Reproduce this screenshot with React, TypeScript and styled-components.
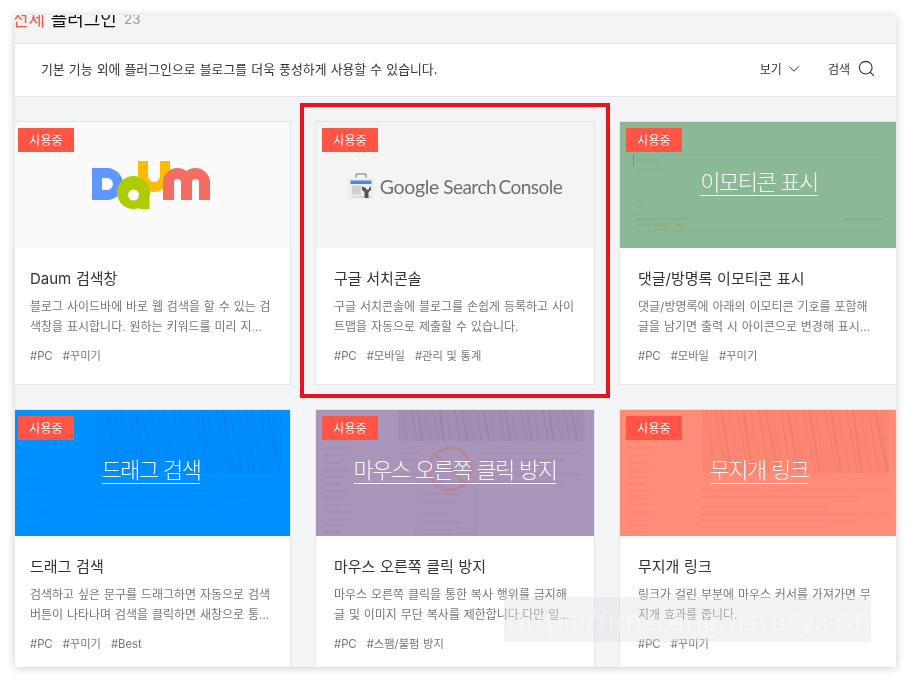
import React from "react";
import styled, { createGlobalStyle } from "styled-components";
import { Search, ChevronDown } from "lucide-react";

const Global = createGlobalStyle`
  html, body { margin: 0; padding: 0; background: #fff; }
  * { box-sizing: border-box; }
  body {
    font-family: Inter, "Noto Sans CJK KR", "Noto Sans", sans-serif;
    word-spacing: 0.03em;
  }
`;

const Page = styled.div`
  width: 911px;
  height: 682px;
  padding: 15px;
  overflow: hidden;
  background: #fff;
  filter: blur(0.35px);
`;

const Panel = styled.main`
  position: relative;
  width: 881px;
  height: 652px;
  overflow: hidden;
  background: #f3f4f6;
  border-radius: 0 6px 0 0;
  box-shadow: 0 1px 10px rgba(0, 0, 0, 0.2);
`;

const Heading = styled.h2`
  height: 28px;
  margin: 0;
  overflow: hidden;
  display: flex;
  align-items: flex-end;
  gap: 7px;
  font-weight: 400;
  color: #111;
`;

const HeadingText = styled.span`
  font-size: 18px;
  line-height: 28px;
  margin: 0 0 9px -3px;
  white-space: nowrap;
`;

const Accent = styled.span`
  color: #ff5544;
`;

const Count = styled.span`
  align-self: flex-start;
  font-size: 13.5px;
  line-height: 18px;
  margin-top: -5px;
  color: #9a9a9a;
`;

const Toolbar = styled.div`
  height: 54px;
  padding: 0 20px 3px 26px;
  display: flex;
  align-items: center;
  justify-content: space-between;
  background: #fff;
  border-top: 1px solid #e2e5ec;
  border-bottom: 1px solid #e2e5ec;
  color: #333;
  font-size: 12.9px;
`;

const Tools = styled.div`
  display: flex;
  align-items: center;
  gap: 25px;
`;

const Tool = styled.span<{ $gap: number }>`
  display: flex;
  align-items: center;
  gap: ${(p) => p.$gap}px;
  color: #333;
  font-size: 12px;
`;

const Grid = styled.div`
  display: grid;
  grid-template-columns: repeat(3, 280px);
  gap: 24px;
  margin: 24px 0 0 -4px;
`;

const Card = styled.article`
  height: 264px;
  background: #fff;
  border: 1px solid #e2e5ec;
`;

const Thumb = styled.div<{ $bg: string }>`
  position: relative;
  height: 126px;
  display: flex;
  align-items: center;
  justify-content: center;
  overflow: hidden;
  background: ${(p) => p.$bg};
`;

const Badge = styled.span`
  position: absolute;
  top: 6px;
  left: 6px;
  z-index: 2;
  width: 56px;
  height: 24px;
  padding-bottom: 2px;
  display: flex;
  align-items: center;
  justify-content: center;
  background: #ff5544;
  color: #fff;
  font-size: 12px;
`;

const HeroTitle = styled.a`
  position: relative;
  z-index: 1;
  margin-top: -5px;
  color: rgba(255, 255, 255, 0.94);
  font-size: 22px;
  font-weight: 300;
  line-height: 26px;
  letter-spacing: -1.5px;
  white-space: nowrap;
  text-decoration: none;
  border-bottom: 1px solid #fff;
`;

const Texture = styled.svg`
  position: absolute;
  inset: 0;
  width: 100%;
  height: 100%;
`;

const Body = styled.div`
  padding: 20px 19px 0 18px;
`;

const Title = styled.h3`
  margin: 0;
  font-size: 15px;
  font-weight: 400;
  line-height: 22px;
  color: #333;
`;

const Desc = styled.p`
  height: 40px;
  margin: 7px 0 0;
  font-size: 12px;
  line-height: 20px;
  color: #777;
  overflow: hidden;
  display: -webkit-box;
  -webkit-box-orient: vertical;
  -webkit-line-clamp: 2;
`;

const Tags = styled.div`
  display: flex;
  gap: 10px;
  margin-top: 10px;
  font-size: 11.3px;
  line-height: 18px;
  color: #777;
`;

const Wordmark = styled.div`
  display: flex;
  align-items: center;
  gap: 6px;
  margin-top: 3px;
  color: #6f6f6f;
  font-family: Lato, Roboto, sans-serif;
  white-space: nowrap;
`;

const Google = styled.span`
  font-size: 19.5px;
  letter-spacing: -0.3px;
`;

const Console = styled.span`
  font-size: 19px;
  letter-spacing: -0.5px;
  word-spacing: -2px;
  margin-left: -2px;
`;

const DaumSvg = styled.svg`
  width: 120px;
  height: 48px;
  margin-left: 2px;
`;

const Highlight = styled.div`
  position: absolute;
  left: 285px;
  top: 88px;
  width: 310px;
  height: 295px;
  border: 4px solid #e8141c;
  z-index: 5;
  pointer-events: none;
`;

const Watermark = styled.div`
  position: absolute;
  left: 489px;
  top: 582px;
  width: 367px;
  height: 45px;
  z-index: 6;
  display: flex;
  align-items: center;
  padding-left: 3px;
  background: rgba(225, 225, 228, 0.42);
  color: rgba(255, 255, 255, 0.3);
  font-family: "Open Sans", sans-serif;
  font-size: 29.5px;
  word-spacing: 0;
  white-space: nowrap;
  overflow: hidden;
`;

const DaumLogo = () => (
  <DaumSvg viewBox="0 0 120 48">
    <path fillRule="evenodd" fill="#6097ff" d="M0 7h15a16 16 0 0 1 0 32H0zM10 17v12h5a6 6 0 0 0 0-12z" />
    <path fill="none" stroke="#ffbb00" strokeWidth="10" d="M51 0V15A11 11 0 0 0 73 15V0" />
    <path fill="none" stroke="#f46d63" strokeWidth="11" d="M76.5 39V21.5A9 9 0 0 1 94.500 21.500V39M94.500 21.500A9 9 0 0 1 112.500 21.500V39" />
    <path fill="#aecb00" fillRule="evenodd" d="M41.500 15a16.500 16.500 0 1 1 0 33a16.500 16.500 0 1 1 0-33zM41.500 28.500a5.500 5.500 0 1 0 0 11a5.500 5.500 0 1 0 0-11z" />
    <rect x="47.500" y="33" width="10" height="15" fill="#aecb00" />
  </DaumSvg>
);

const GscIcon = () => (
  <svg width="26" height="27" viewBox="0 0 26 27">
    <path d="M8 5V2.500a1.500 1.500 0 0 1 1.500-1.500h7A1.500 1.500 0 0 1 18 2.500V5" fill="none" stroke="#9a9a9a" strokeWidth="1.600" />
    <rect x="0.500" y="4.500" width="25" height="21.500" rx="2" fill="#ededed" />
    <rect x="2.500" y="7.500" width="21" height="3.500" fill="#4a86e8" />
    <rect x="4" y="12.500" width="9" height="9" fill="#cfcfcf" />
    <rect x="4" y="23" width="19" height="1.500" fill="#d6d6d6" />
    <path d="M14 13.500v3.500l2.500 2v6h4v-6l2.500-2v-3.500l-2 1.500v1.500h-3V15z" fill="#555" />
  </svg>
);

type Kind = "none" | "comment" | "drag" | "mouse" | "rainbow";

const SIDE_ROWS = [38, 45, 53, 60, 67, 74, 81, 88, 95, 102, 115, 122];
const BODY_ROWS = [80, 87, 97, 104, 110, 117];
const MOUSE_ROWS = [43, 50, 57, 64, 71];

const TextRows = ({ x, ys, w, color }: { x: number; ys: number[]; w: number; color: string }) => (
  <g stroke={color} strokeWidth="1.400" strokeDasharray="2 0.700" fill="none" opacity="0.13">
    {ys.map((y, i) => (
      <path key={y} d={`M${x} ${y}h${w - (i % 3) * (w / 6)}`} />
    ))}
  </g>
);

const Books = ({ h, color }: { h: number; color: string }) => (
  <g>
    <rect x="82" y="0" width="187" height={h} fill={color} opacity="0.08" />
    <g stroke={color} fill="none" opacity="0.16">
      {Array.from({ length: 25 }, (_, i) => {
        const x0 = 86 + i * 7.300 + ((i * 5) % 3);
        const slant = (h / 63) * (9 + ((i * 3) % 5));
        const bottom = Math.min(x0 + slant, 268);
        return <path key={i} d={`M${x0} 0L${bottom} ${h}`} strokeWidth={0.6 + (i % 3) * 0.7} />;
      })}
    </g>
  </g>
);

const ThumbTexture = ({ kind }: { kind: Kind }) => {
  if (kind === "none") return null;
  if (kind === "comment") {
    return (
      <Texture viewBox="0 0 278 126">
        <rect x="13" y="32" width="1" height="12" fill="#5d8a68" opacity="0.7" />
        <TextRows x={17} ys={[38]} w={22} color="#2f5a3a" />
        <TextRows x={17} ys={[48]} w={30} color="#3f6a4a" />
        <rect x="14" y="79" width="251" height="14" fill="none" stroke="#6f9f7b" strokeWidth="0.500" opacity="0.3" />
        <path d="M14 33H265M14 108H265" stroke="#6f9f7b" strokeWidth="0.500" opacity="0.25" />
        <TextRows x={18} ys={[85]} w={5} color="#2f5a3a" />
        <TextRows x={17} ys={[97]} w={50} color="#2f5a3a" />
        <TextRows x={17} ys={[103]} w={14} color="#2f5a3a" />
        <TextRows x={225} ys={[97]} w={38} color="#2f5a3a" />
        <g fill="#a3a65a" opacity="0.6">
          {[36, 42, 47, 58, 63].map((cx) => (
            <circle key={cx} cx={cx} cy="103" r="2" />
          ))}
        </g>
      </Texture>
    );
  }
  const tone = kind === "drag" ? "#0062c8" : kind === "mouse" ? "#6b5a6d" : "#c9503a";
  return (
    <Texture viewBox="0 0 278 126">
      <Books h={kind === "mouse" ? 31 : 63} color={tone} />
      <TextRows x={8} ys={SIDE_ROWS} w={26} color={tone} />
      {kind === "mouse" ? (
        <>
          <TextRows x={165} ys={MOUSE_ROWS} w={100} color={tone} />
          <TextRows x={85} ys={[43, 50, 57, 64]} w={20} color={tone} />
          <rect x="100" y="72" width="60" height="52" fill="none" stroke={tone} strokeWidth="0.500" opacity="0.2" />
          <TextRows x={105} ys={[84, 92, 104, 112, 120]} w={40} color={tone} />
          <g fill="none" stroke="#bd7f87" strokeWidth="3.200" opacity="0.6">
            <circle cx="134" cy="59" r="21" />
            <path d="M119 44L149 74" />
          </g>
        </>
      ) : (
        <TextRows x={82} ys={BODY_ROWS} w={188} color={tone} />
      )}
    </Texture>
  );
};

const CARDS: {
  bg: string;
  hero?: string;
  logo?: "daum" | "gsc";
  kind: Kind;
  title: string;
  desc: string;
  tags: string[];
}[] = [
  {
    bg: "#fafafa",
    logo: "daum",
    kind: "none",
    title: "Daum 검색창",
    desc: "블로그 사이드바에 바로 웹 검색을 할 수 있는 검색창을 표시합니다. 원하는 키워드를 미리 지정해 둘 수 있습니다.",
    tags: ["#PC", "#꾸미기"],
  },
  {
    bg: "#f4f4f4",
    logo: "gsc",
    kind: "none",
    title: "구글 서치콘솔",
    desc: "구글 서치콘솔에 블로그를 손쉽게 등록하고 사이트맵을 자동으로 제출할 수 있습니다.",
    tags: ["#PC", "#모바일", "#관리 및 통계"],
  },
  {
    bg: "#8cb995",
    hero: "이모티콘 표시",
    kind: "comment",
    title: "댓글/방명록 이모티콘 표시",
    desc: "댓글/방명록에 아래의 이모티콘 기호를 포함해 글을 남기면 출력 시 아이콘으로 변경해 표시합니다. 다양한 기호를 지원합니다.",
    tags: ["#PC", "#모바일", "#꾸미기"],
  },
  {
    bg: "#0090ff",
    hero: "드래그 검색",
    kind: "drag",
    title: "드래그 검색",
    desc: "검색하고 싶은 문구를 드래그하면 자동으로 검색 버튼이 나타나며 검색을 클릭하면 새창으로 통합 검색 결과를 보여줍니다.",
    tags: ["#PC", "#꾸미기", "#Best"],
  },
  {
    bg: "#a994ba",
    hero: "마우스 오른쪽 클릭 방지",
    kind: "mouse",
    title: "마우스 오른쪽 클릭 방지",
    desc: "마우스 오른쪽 클릭을 통한 복사 행위를 금지해 글 및 이미지 무단 복사를 제한합니다.다만 일부 브라우저에서는 동작하지 않습니다.",
    tags: ["#PC", "#스팸/불펌 방지"],
  },
  {
    bg: "#ff8c78",
    hero: "무지개 링크",
    kind: "rainbow",
    title: "무지개 링크",
    desc: "링크가 걸린 부분에 마우스 커서를 가져가면 무지개 효과를 줍니다.",
    tags: ["#PC", "#꾸미기"],
  },
];

export default function App() {
  return (
    <>
      <Global />
      <Page>
        <Panel>
          <Heading>
            <HeadingText>
              <Accent>전체</Accent> 플러그인
            </HeadingText>
            <Count>23</Count>
          </Heading>
          <Toolbar>
            <span>기본 기능 외에 플러그인으로 블로그를 더욱 풍성하게 사용할 수 있습니다.</span>
            <Tools>
              <Tool $gap={3}>
                보기 <ChevronDown size={18} strokeWidth={1.300} color="#333" />
              </Tool>
              <Tool $gap={7}>
                검색 <Search size={19} strokeWidth={1.400} color="#333" />
              </Tool>
            </Tools>
          </Toolbar>
          <Grid>
            {CARDS.map((c) => (
              <Card key={c.title}>
                <Thumb $bg={c.bg}>
                  <Badge>사용중</Badge>
                  <ThumbTexture kind={c.kind} />
                  {c.logo === "daum" && <DaumLogo />}
                  {c.logo === "gsc" && (
                    <Wordmark>
                      <GscIcon />
                      <Google>Google</Google>
                      <Console>Search Console</Console>
                    </Wordmark>
                  )}
                  {c.hero && <HeroTitle>{c.hero}</HeroTitle>}
                </Thumb>
                <Body>
                  <Title>{c.title}</Title>
                  <Desc>{c.desc}</Desc>
                  <Tags>
                    {c.tags.map((t) => (
                      <span key={t}>{t}</span>
                    ))}
                  </Tags>
                </Body>
              </Card>
            ))}
          </Grid>
          <Highlight />
          <Watermark>https://imzrang.tistory.com</Watermark>
        </Panel>
      </Page>
    </>
  );
}
